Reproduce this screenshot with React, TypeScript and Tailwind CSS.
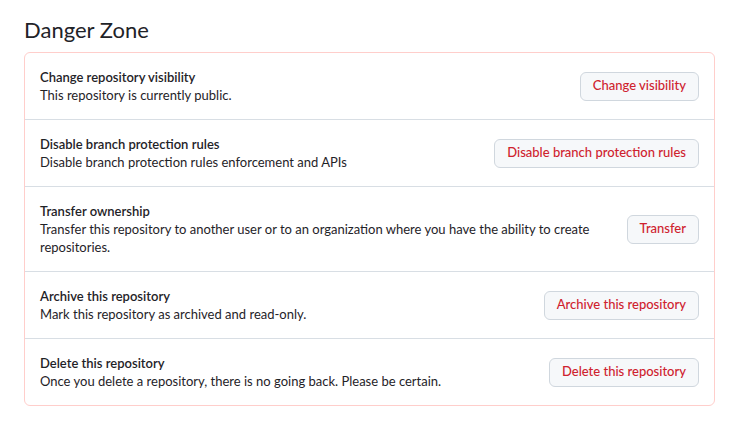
import React from "react";

const rows = [
  {
    title: "Change repository visibility",
    desc: "This repository is currently public.",
    action: "Change visibility",
  },
  {
    title: "Disable branch protection rules",
    desc: "Disable branch protection rules enforcement and APIs",
    action: "Disable branch protection rules",
  },
  {
    title: "Transfer ownership",
    desc: "Transfer this repository to another user or to an organization where you have the ability to create repositories.",
    action: "Transfer",
  },
  {
    title: "Archive this repository",
    desc: "Mark this repository as archived and read-only.",
    action: "Archive this repository",
  },
  {
    title: "Delete this repository",
    desc: "Once you delete a repository, there is no going back. Please be certain.",
    action: "Delete this repository",
  },
];

const App = () => {
  return (
    <section className="min-h-screen bg-white px-6 pt-[14px] font-['Lato',sans-serif] text-[#1f2328]">
      <h2 className="pb-[6px] text-[22px] leading-[32px] font-normal">Danger Zone</h2>
      <div className="w-[691px] rounded-md border border-[#ffcecb]">
        {rows.map((row, i) => (
          <div
            key={row.title}
            className={`flex items-center justify-between gap-4 px-[15px] py-[15px] ${
              i > 0 ? "border-t border-[#d8dee4]" : ""
            }`}
          >
            <div className="max-w-[560px] text-[13px] leading-[18px]">
              <p className="font-semibold">{row.title}</p>
              <p>{row.desc}</p>
            </div>
            <button className="h-[29px] shrink-0 rounded-md border border-[#d0d7de] bg-[#f6f8fa] px-[12px] text-[13px] font-medium text-[#cf222e]">
              {row.action}
            </button>
          </div>
        ))}
      </div>
    </section>
  );
};

export default App;
